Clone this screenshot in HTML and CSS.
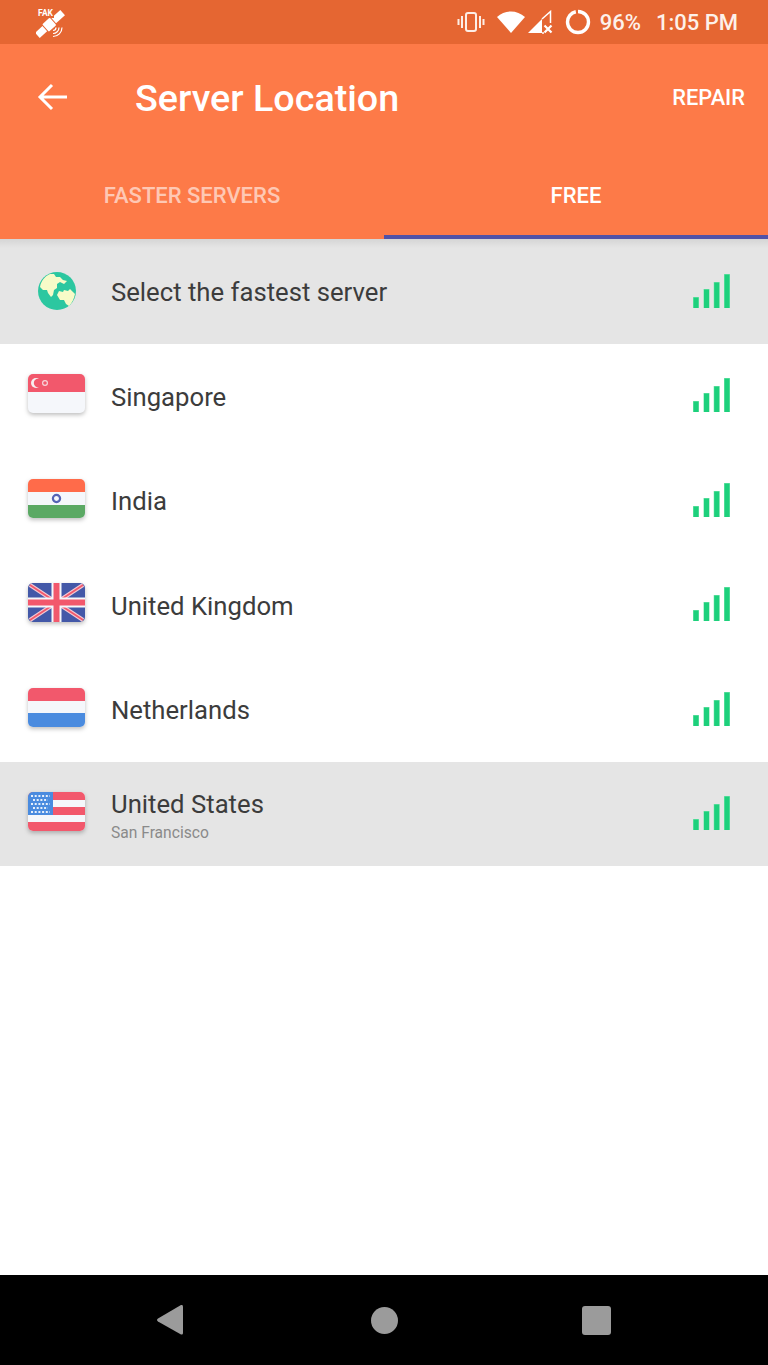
FILE: index.html
```html
<!DOCTYPE html>
<html lang="en">

<head>
  <meta charset="UTF-8">
  <meta name="viewport" content="width=device-width, initial-scale=1.0">
  <title>Server Location</title>
  <link rel="stylesheet" href="styles.css">
</head>

<body>
  <svg class="defs" width="0" height="0">
    <symbol id="bars" viewBox="0 0 38 34">
      <path d="M0 23 H6 V34 H0 Z M10.500 15 H16.500 V34 H10.500 Z M20.700 8 H26.700 V34 H20.700 Z M31 0 H37 V34 H31 Z" fill="#7de6b0" />
      <path d="M.5 23.500 H5.500 V34 H.5 Z M11 15.500 H16 V34 H11 Z M21.200 8.500 H26.200 V34 H21.200 Z M31.500 .5 H36.500 V34 H31.500 Z" fill="#1dd07c" />
    </symbol>
  </svg>

  <div class="phone">
    <!-- status bar -->
    <div class="status">
      <div class="fake">
        <svg width="30" height="30" viewBox="0 0 30 30">
          <g fill="#fff" transform="rotate(-42 14 15)">
            <rect x="-3" y="11.500" width="10" height="7" />
            <rect x="8" y="10" width="10" height="10" rx="1" />
            <rect x="19" y="11.500" width="12" height="7" />
          </g>
          <g fill="none" stroke="#fff" stroke-width="1.200">
            <path d="M17 21.500 A 3 3 0 0 0 20 18.500" />
            <path d="M17 24.500 A 6 6 0 0 0 23 18.500" />
            <path d="M17 27.500 A 9 9 0 0 0 26 18.500" />
          </g>
        </svg>
        <span class="fake-text">FAK</span>
      </div>
      <div class="status-right">
        <svg class="ic-vibrate" width="28" height="22" viewBox="0 0 28 22">
          <rect x="9" y="2" width="10" height="18" rx="2" fill="none" stroke="#fdeee6" stroke-width="2" />
          <path d="M1.500 8 V14 M5 5 V17 M23 5 V17 M26.500 8 V14" stroke="#fdeee6" stroke-width="2" fill="none" />
        </svg>
        <svg class="ic-wifi" width="28" height="22" viewBox="0 0 28 22">
          <path d="M0 6 C8 -1.500 20 -1.500 28 6 L14 22 Z" fill="#fff" />
        </svg>
        <svg class="ic-signal" width="26" height="24" viewBox="0 0 26 24">
          <path d="M1 23 L15 9 V23 Z" fill="#fff" />
          <path d="M15 9 L23.500 1.500 V13 M15 23 H17" fill="none" stroke="#fff" stroke-width="1.500" />
          <path d="M17.500 15.500 L24.500 22.500 M24.500 15.500 L17.500 22.500" stroke="#fff" stroke-width="2.200" />
        </svg>
        <svg class="ic-battery" width="26" height="26" viewBox="0 0 26 26">
          <circle cx="13" cy="13" r="10.500" fill="none" stroke="#fff" stroke-width="3.400" stroke-dasharray="63.300 2.700" transform="rotate(-90 13 13)" />
        </svg>
        <span class="battery">96%</span>
        <span class="clock">1:05 PM</span>
      </div>
    </div>

    <!-- 顶部栏 -->
    <div class="appbar">
      <div class="toolbar">
        <svg class="back" width="32" height="30" viewBox="0 0 32 30">
          <path d="M30 15 H3 M15 3 L3 15 L15 27" fill="none" stroke="#fff" stroke-width="3" />
        </svg>
        <h1 class="title">Server Location</h1>
        <a class="repair" href="javascript:;">REPAIR</a>
      </div>
      <div class="tabs">
        <a class="tab" href="javascript:;">FASTER SERVERS</a>
        <a class="tab active" href="javascript:;">FREE</a>
      </div>
    </div>

    <!-- server list -->
    <ul class="list">
      <li class="row selected">
        <svg class="globe" width="40" height="40" viewBox="0 0 40 40">
          <circle cx="20" cy="20" r="19" fill="#2cc7a0" />
          <path d="M3 16 C4 10 8 5 13 3 L17 3 L19 6 L23 6 L26 9 L30 10 L27 13 L23 11 L20 13 L20 17 L17 19 L16 24 L14 26 L11 22 L10 19 L6 19 Z" fill="#f7fbc8" />
          <path d="M20 24 L22 20 L26 21 L27 19 L31 20 L33 18 L36 21 L38 23 C37 28 35 32 32 35 L29 33 L27 29 L23 29 Z" fill="#f7fbc8" />
        </svg>
        <span class="name">Select the fastest server</span>
        <svg class="bars" width="38" height="34"><use href="#bars" /></svg>
      </li>
      <li class="row">
        <svg class="flag" width="57" height="39" viewBox="0 0 57 39">
          <rect width="57" height="39" rx="5" fill="#f5f7fb" />
          <path d="M0 18 V5 A5 5 0 0 1 5 0 H52 A5 5 0 0 1 57 5 V18 Z" fill="#f2586c" />
          <circle cx="8" cy="9" r="5" fill="#f7eef0" />
          <circle cx="10" cy="9" r="4.200" fill="#f2586c" />
          <circle cx="17" cy="9" r="2.400" fill="none" stroke="#f7d6da" stroke-width="1.200" />
        </svg>
        <span class="name">Singapore</span>
        <svg class="bars" width="38" height="34"><use href="#bars" /></svg>
      </li>
      <li class="row">
        <svg class="flag" width="57" height="39" viewBox="0 0 57 39">
          <rect width="57" height="39" rx="5" fill="#f5f7fb" />
          <path d="M0 13 V5 A5 5 0 0 1 5 0 H52 A5 5 0 0 1 57 5 V13 Z" fill="#ff6b4a" />
          <path d="M0 26 V34 A5 5 0 0 0 5 39 H52 A5 5 0 0 0 57 34 V26 Z" fill="#5ba964" />
          <circle cx="28.500" cy="19.500" r="3.600" fill="none" stroke="#5563b5" stroke-width="2.200" />
        </svg>
        <span class="name">India</span>
        <svg class="bars" width="38" height="34"><use href="#bars" /></svg>
      </li>
      <li class="row">
        <svg class="flag" width="57" height="39" viewBox="0 0 57 39">
          <rect width="57" height="39" rx="5" fill="#4358a8" />
          <path d="M2 2 L55 37 M55 2 L2 37" stroke="#f5c9d2" stroke-width="4" />
          <path d="M2 2 L55 37 M55 2 L2 37" stroke="#f2586c" stroke-width="1.800" />
          <path d="M28.500 0 V39 M0 19.500 H57" stroke="#f5f7fb" stroke-width="10" />
          <path d="M28.500 0 V39 M0 19.500 H57" stroke="#f2586c" stroke-width="6" />
        </svg>
        <span class="name">United Kingdom</span>
        <svg class="bars" width="38" height="34"><use href="#bars" /></svg>
      </li>
      <li class="row">
        <svg class="flag" width="57" height="39" viewBox="0 0 57 39">
          <rect width="57" height="39" rx="5" fill="#f5f7fb" />
          <path d="M0 13 V5 A5 5 0 0 1 5 0 H52 A5 5 0 0 1 57 5 V13 Z" fill="#f2586c" />
          <path d="M0 25 V34 A5 5 0 0 0 5 39 H52 A5 5 0 0 0 57 34 V25 Z" fill="#4a8bdf" />
        </svg>
        <span class="name">Netherlands</span>
        <svg class="bars" width="38" height="34"><use href="#bars" /></svg>
      </li>
      <li class="row selected">
        <svg class="flag" width="57" height="39" viewBox="0 0 57 39">
          <rect width="57" height="39" rx="5" fill="#f5f7fb" />
          <path d="M0 5 A5 5 0 0 1 5 0 H52 A5 5 0 0 1 57 5 V8 H0 Z M0 15 H57 V23 H0 Z" fill="#f2586c" />
          <path d="M0 30 H57 V34 A5 5 0 0 1 52 39 H5 A5 5 0 0 1 0 34 Z" fill="#f2586c" />
          <path d="M0 23 V5 A5 5 0 0 1 5 0 H25 V23 Z" fill="#4a8bdf" />
          <path d="M3 4 H22 M5 8 H20 M3 12 H22 M5 16 H20 M3 20 H22" stroke="#e6effb" stroke-width="2" stroke-dasharray="2 1.700" />
        </svg>
        <div class="name-wrap">
          <span class="name">United States</span>
          <span class="city">San Francisco</span>
        </div>
        <svg class="bars" width="38" height="34"><use href="#bars" /></svg>
      </li>
    </ul>

    <!-- nav bar -->
    <div class="navbar">
      <svg width="28" height="32" viewBox="0 0 28 32"><path d="M26 1 Q27 1 27 3 V29 Q27 31 25 30.500 L2 17.500 Q0 16 2 14.500 L25 1 Z" fill="#9b9b9b" /></svg>
      <span class="nav-home"></span>
      <span class="nav-recent"></span>
    </div>
  </div>
</body>

</html>
```

FILE: styles.css
```css
* {
  margin: 0;
  padding: 0;
  box-sizing: border-box;
}

ul {
  list-style: none;
}

a {
  text-decoration: none;
  color: inherit;
}

body {
  font-family: Roboto, "Liberation Sans", sans-serif;
  background-color: #fff;
}

svg {
  display: block;
  flex: none;
}

.defs {
  position: absolute;
}

.phone {
  width: 768px;
  height: 1365px;
  display: flex;
  flex-direction: column;
  overflow: hidden;
}

/* status bar */
.status {
  height: 44px;
  background-color: #e56632;
  color: #fff;
  display: flex;
  align-items: center;
  justify-content: space-between;
  padding: 0 30px 0 36px;
}

.fake {
  position: relative;
  width: 30px;
  height: 30px;
  margin-top: 3px;
}

.fake-text {
  position: absolute;
  left: 2px;
  top: 0;
  font-size: 8.500px;
  font-weight: 700;
  line-height: 9px;
  color: #fff;
  background-color: #e56632;
  padding-right: 1px;
}

.status-right {
  display: flex;
  align-items: center;
  font-size: 22px;
  font-weight: 500;
  color: #fdf1ea;
}

.ic-wifi {
  margin-left: 12px;
}

.ic-signal {
  margin-left: 2px;
}

.ic-battery {
  margin-left: 12px;
}

.battery {
  margin-left: 9px;
  margin-top: 1px;
}

.clock {
  margin-left: 15px;
  margin-top: 1px;
}

/* 顶部栏 */
.appbar {
  height: 195px;
  background-color: #fd7a48;
  color: #fff;
  display: flex;
  flex-direction: column;
}

.toolbar {
  height: 106px;
  display: flex;
  align-items: center;
  padding: 0 23px 0 37px;
}

.back {
  margin-top: -1px;
}

.title {
  flex: 1;
  margin-left: 66px;
  margin-top: 2px;
  font-size: 37.700px;
  font-weight: 500;
  line-height: 44px;
}

.repair {
  font-size: 21.800px;
  font-weight: 500;
}

.tabs {
  flex: 1;
  display: flex;
}

.tab {
  flex: 1;
  display: flex;
  justify-content: center;
  padding-top: 33px;
  font-size: 22px;
  font-weight: 500;
  color: rgba(255, 255, 255, .6);
  border-bottom: 4px solid transparent;
}

.tab.active {
  color: #fff;
  border-bottom-color: #5052a8;
}

/* 列表 */
.list {
  flex: 1;
  position: relative;
}

.list::before {
  content: "";
  position: absolute;
  top: 0;
  left: 0;
  right: 0;
  height: 9px;
  background: linear-gradient(rgba(0, 0, 0, .07), rgba(0, 0, 0, 0));
}

.row {
  height: 104.500px;
  display: flex;
  align-items: center;
  padding-left: 28px;
  padding-right: 37.500px;
  color: #3c3c3c;
}

.row.selected {
  background-color: #e5e5e5;
}

.flag {
  margin-right: 26px;
  margin-top: -4px;
  overflow: visible;
  filter: drop-shadow(0 2px 2px rgba(0, 0, 0, .25));
}

.globe {
  margin: -1px 34px 0 9px;
}

.name {
  flex: 1;
  margin-top: 2px;
  font-size: 25.700px;
  line-height: 30px;
}

.name-wrap {
  flex: 1;
  display: flex;
  flex-direction: column;
  margin-top: 4px;
}

.name-wrap .name {
  flex: none;
  margin-top: 0;
}

.city {
  font-size: 15.600px;
  line-height: 20px;
  color: #8a8a8a;
  margin-top: 4px;
}

.bars {
  margin-top: -1px;
}

/* nav bar */
.navbar {
  height: 90px;
  background-color: #000;
  display: flex;
  align-items: center;
  padding-left: 156px;
}

.nav-home {
  width: 27px;
  height: 27px;
  border-radius: 50%;
  background-color: #9b9b9b;
  margin-left: 186.500px;
}

.nav-recent {
  width: 29px;
  height: 29px;
  border-radius: 3px;
  background-color: #9b9b9b;
  margin-left: 184px;
}
```
